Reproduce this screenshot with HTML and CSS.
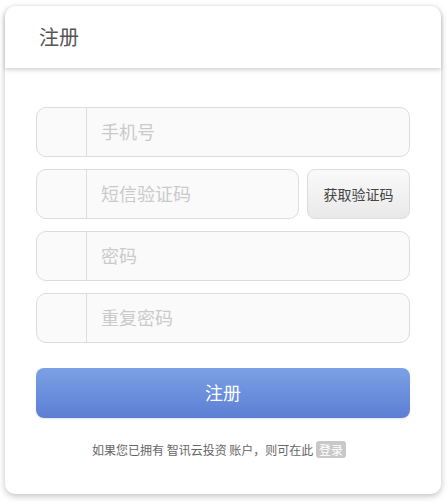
FILE: index.html
```html
<!DOCTYPE html>
<html lang="zh">
<head>
<meta charset="utf-8">
<link rel="stylesheet" href="styles.css">
</head>
<body>
<div class="card">
  <div class="card-header">注册</div>
  <div class="card-body">
    <div class="field">
      <span class="addon"></span>
      <span class="ph">手机号</span>
    </div>
    <div class="row">
      <div class="field grow">
        <span class="addon"></span>
        <span class="ph">短信验证码</span>
      </div>
      <button class="code-btn">获取验证码</button>
    </div>
    <div class="field">
      <span class="addon"></span>
      <span class="ph">密码</span>
    </div>
    <div class="field">
      <span class="addon"></span>
      <span class="ph">重复密码</span>
    </div>
    <button class="submit">注册</button>
    <p class="foot">如果您已拥有&nbsp;智讯云投资&nbsp;账户，则可在此&nbsp;<span class="login">登录</span></p>
  </div>
</div>
</body>
</html>
```
FILE: styles.css
```css
html, body { margin: 0; padding: 0; background: #fff; }
body {
  padding: 6px 6px 8px 5px;
  font-family: "Noto Sans CJK SC", "Noto Sans", sans-serif;
}
.card {
  background: #fff;
  border-radius: 10px;
  box-shadow: 0 2px 6px rgba(0,0,0,0.25);
  height: 488px;
  box-sizing: border-box;
}
.card-header {
  height: 62px;
  box-sizing: border-box;
  padding-left: 34px;
  padding-bottom: 2px;
  display: flex;
  align-items: center;
  font-size: 20px;
  color: #555;
  border-radius: 10px 10px 0 0;
  box-shadow: 0 2px 4px rgba(0,0,0,0.18);
  position: relative;
}
.card-body {
  padding: 39px 31px 0 31px;
  display: flex;
  flex-direction: column;
  gap: 12px;
}
.row { display: flex; gap: 8px; }
.field {
  height: 50px;
  box-sizing: border-box;
  border: 1px solid #dcdcdc;
  border-radius: 10px;
  background: #fafafa;
  display: flex;
  align-items: center;
}
.grow { flex: 1; }
.addon {
  width: 49px;
  height: 100%;
  border-right: 1px solid #dcdcdc;
}
.ph {
  padding-left: 14px;
  font-size: 18px;
  color: #cacaca;
  padding-bottom: 2px;
}
.code-btn {
  width: 103px;
  height: 50px;
  border: 1px solid #dcdcdc;
  border-radius: 8px;
  background: linear-gradient(#fafafa, #e9e9e9);
  font-family: inherit;
  font-size: 14px;
  color: #444;
  padding: 0;
}
.submit {
  margin-top: 13px;
  height: 50px;
  border: none;
  border-radius: 8px;
  background: linear-gradient(#7aa1e5, #5d7ed4);
  color: #fff;
  font-family: inherit;
  font-size: 18px;
  padding-bottom: 3px;
  box-shadow: 0 1px 2px rgba(0,0,0,0.1);
}
.foot {
  margin: 11px 0 0;
  padding-right: 8px;
  text-align: center;
  font-size: 12px;
  color: #666;
}
.login {
  display: inline-block;
  background: #c8c8c8;
  color: #fff;
  border-radius: 3px;
  padding: 0 3px;
  line-height: 17px;
}
```
